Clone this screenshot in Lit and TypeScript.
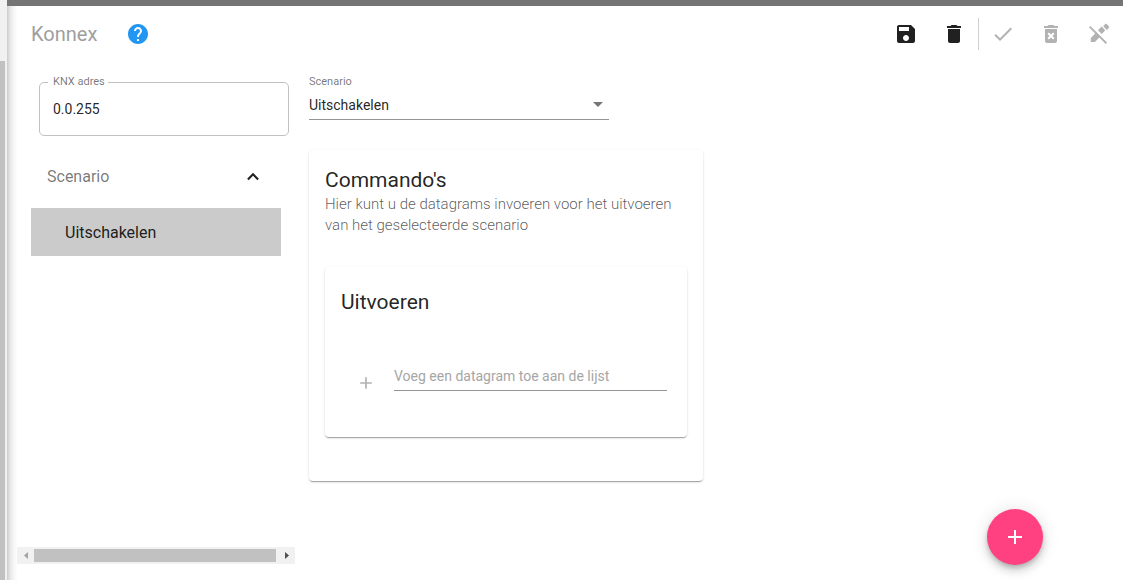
import { LitElement, html, css, svg } from "lit";
import { customElement, state } from "lit/decorators.js";

const paths = {
  help: "M12 2C6.48 2 2 6.48 2 12s4.48 10 10 10 10-4.48 10-10S17.520 2 12 2zm1 17h-2v-2h2v2zm2.070-7.750l-.9.920C13.450 12.900 13 13.500 13 15h-2v-.5c0-1.100.45-2.100 1.170-2.830l1.240-1.260c.37-.36.59-.86.59-1.410 0-1.100-.9-2-2-2s-2 .9-2 2H8c0-2.210 1.790-4 4-4s4 1.790 4 4c0 .88-.36 1.680-.93 2.250z",
  save: "M17 3H5c-1.110 0-2 .9-2 2v14c0 1.100.89 2 2 2h14c1.100 0 2-.9 2-2V7l-4-4zm-5 16c-1.660 0-3-1.340-3-3s1.340-3 3-3 3 1.340 3 3-1.340 3-3 3zm3-10H5V5h10v4z",
  trash: "M6 19c0 1.100.9 2 2 2h8c1.100 0 2-.9 2-2V7H6v12zM19 4h-3.500l-1-1h-5l-1 1H5v2h14V4z",
  check: "M9 16.170L4.830 12l-1.420 1.410L9 19 21 7l-1.410-1.410z",
  add: "M19 13h-6v6h-2v-6H5v-2h6V5h2v6h6v2z",
  chevronUp: "M12 7l-7 7 1.800 1.800L12 10.600l5.200 5.200L19 14z",
  removeAll: "M6 19c0 1.100.9 2 2 2h8c1.100 0 2-.9 2-2V7H6v12zm2.460-7.120l1.410-1.410L12 12.590l2.120-2.120 1.410 1.410L13.410 14l2.120 2.120-1.410 1.410L12 15.410l-2.120 2.120-1.410-1.410L10.590 14l-2.130-2.120zM15.500 4l-1-1h-5l-1 1H5v2h14V4z",
  editOff: "M2 5.200L3.300 3.900 20 20.600 18.700 21.900 12.300 15.600 7.900 20H3.800v-4.100l4.400-4.400zM11 8.200L14.600 4.600 18.300 8.300 14.700 11.900zM16.200 4.200L18.300 2.100c.4-.4 1-.4 1.400 0L22 4.400c.4.4.4 1 0 1.400L19.900 7.900z",
};

const icon = (d: string, size = 24) => svg`
  <svg class="icon" width=${size} height=${size} viewBox="0 0 24 24" aria-hidden="true"><path d=${d} /></svg>`;

@customElement("app-root")
export class AppRoot extends LitElement {
  static styles = css`
    :host {
      display: grid;
      grid-template-columns: 7px minmax(0, 1fr);
      min-height: 100vh;
      background: #fff;
      color: rgba(0, 0, 0, 0.87);
      font: 400 14px/20px Roboto, "Liberation Sans", sans-serif;
    }
    * { box-sizing: border-box; }
    button, input, select { font: inherit; color: inherit; margin: 0; border: 0; padding: 0; background: none; border-radius: 0; outline: 0; }
    button { cursor: pointer; }
    h1, h2, h3, p, ul { margin: 0; padding: 0; font-weight: 400; list-style: none; }
    .icon { display: block; fill: currentColor; }

    .track { background: #f1f1f1; padding: 61px 2px 0 0; display: flex; }
    .track-thumb { flex: 1; background: #c1c1c1; }

    .panel {
      display: flex;
      flex-direction: column;
      border-top: 6px solid #757575;
      background: linear-gradient(to right, #ccc, #e6e6e6 3px, #f7f7f7 7px, #fff 11px);
    }
    .toolbar { display: flex; align-items: center; height: 56px; padding-left: 24px; }
    .title { font-size: 20px; line-height: 28px; font-weight: 400; color: #9e9e9e; }
    .help { margin-left: 29px; color: #2196f3; }
    .actions { display: flex; align-items: center; margin-left: auto; }
    .action { width: 48px; height: 48px; display: grid; place-items: center; }
    .action:disabled { color: #b2b2b2; cursor: default; }
    .divider { width: 1px; height: 32px; background: #cfcfcf; }

    .body { flex: 1; display: flex; }
    .side { width: 278px; margin: 0 14px 16px 10px; display: flex; flex-direction: column; }
    .side-content { flex: 1; padding: 20px 6px 0 14px; }
    .outlined { position: relative; display: flex; margin-left: 8px; border: 1px solid #c1c1c1; border-radius: 5px; height: 54px; }
    .outlined-label { position: absolute; left: 8px; top: -9px; padding: 0 3px 0 5px; background: #fff; font-size: 11px; line-height: 16px; color: rgba(0, 0, 0, 0.54); }
    .outlined-input { flex: 1; min-width: 0; padding: 0 13px; }
    .group { display: flex; align-items: center; justify-content: space-between; width: 100%; height: 48px; margin: 16px 0 8px; padding: 1px 26px 0 16px; font-size: 16px; }
    .group-name { color: rgba(0, 0, 0, 0.54); }
    .item { display: block; width: 250px; height: 48px; padding: 1px 0 0 34px; background: #cbcbcb; font-size: 16px; text-align: left; }

    .hscroll { display: flex; align-items: center; height: 17px; background: #f1f1f1; }
    .hscroll-arrow { width: 17px; height: 17px; display: grid; place-items: center; color: #a3a3a3; }
    .hscroll-arrow.next { color: #505050; margin-left: auto; }
    .hscroll-thumb { width: 242px; height: 13px; background: #c1c1c1; }

    .main { flex: 1; min-width: 0; padding: 12px 16px 16px 0; }
    .field { position: relative; display: flex; flex-direction: column; width: 300px; }
    .field-label { font-size: 11px; line-height: 16px; color: rgba(0, 0, 0, 0.54); }
    .select { appearance: none; height: 30px; border-bottom: 1px solid #949494; }
    .caret { position: absolute; right: 6px; bottom: 13px; border: 5px solid transparent; border-top-color: #757575; border-bottom: 0; pointer-events: none; }
    .card {
      border-radius: 4px;
      background: #fff;
      box-shadow: 0 2px 1px -1px rgba(0, 0, 0, 0.2), 0 1px 1px rgba(0, 0, 0, 0.14), 0 1px 3px rgba(0, 0, 0, 0.12);
    }
    .outer { width: 100%; max-width: 394px; margin-top: 30px; padding: 16px 16px 44px; }
    .heading { font-size: 21px; line-height: 28px; }
    .subtitle { font-size: 15px; font-weight: 300; line-height: 21px; color: rgba(0, 0, 0, 0.66); }
    .inner { margin-top: 31px; padding: 21px 20px 46px 16px; }
    .add-row { display: flex; align-items: flex-end; gap: 20px; margin-top: 46px; padding-left: 16px; }
    .add { display: grid; justify-content: center; width: 17px; height: 18px; color: #b2b2b2; }
    .datagram { flex: 1; min-width: 0; height: 29px; border-bottom: 1px solid #949494; }
    .datagram::placeholder { color: #a6a6a6; opacity: 1; }

    .fab {
      position: fixed;
      right: 80px;
      bottom: 15px;
      width: 56px;
      height: 56px;
      display: grid;
      place-items: center;
      border-radius: 50%;
      background: #ff4081;
      color: #fff;
      box-shadow: 0 3px 5px -1px rgba(0, 0, 0, 0.2), 0 6px 10px rgba(0, 0, 0, 0.14), 0 1px 18px rgba(0, 0, 0, 0.12);
    }
  `;

  @state() private address = "0.0.255";
  @state() private open = true;
  @state() private scenarios = ["Uitschakelen"];

  private action(label: string, d: string, disabled = false) {
    return html`<button class="action" aria-label=${label} ?disabled=${disabled}>${icon(d)}</button>`;
  }

  render() {
    return html`
      <div class="track"><div class="track-thumb"></div></div>
      <div class="panel">
        <header class="toolbar">
          <h1 class="title">Konnex</h1>
          <button class="help" aria-label="Help">${icon(paths.help)}</button>
          <div class="actions">
            ${this.action("Opslaan", paths.save)}
            ${this.action("Verwijderen", paths.trash)}
            <span class="divider"></span>
            ${this.action("Bevestigen", paths.check, true)}
            ${this.action("Alles verwijderen", paths.removeAll, true)}
            ${this.action("Bewerken uit", paths.editOff, true)}
          </div>
        </header>
        <div class="body">
          <aside class="side">
            <div class="side-content">
              <div class="outlined">
                <label class="outlined-label" for="address">KNX adres</label>
                <input class="outlined-input" id="address" .value=${this.address}
                  @input=${(e: Event) => (this.address = (e.target as HTMLInputElement).value)} />
              </div>
              <button class="group" aria-expanded=${this.open} @click=${() => (this.open = !this.open)}>
                <span class="group-name">Scenario</span>${icon(paths.chevronUp, 20)}
              </button>
              ${this.open
                ? html`<ul>${this.scenarios.map((s) => html`<li><button class="item">${s}</button></li>`)}</ul>`
                : ""}
            </div>
            <div class="hscroll">
              <span class="hscroll-arrow"><svg class="icon" width="4" height="7" viewBox="0 0 4 7"><path d="M4 0v7L0 3.500z" /></svg></span>
              <span class="hscroll-thumb"></span>
              <span class="hscroll-arrow next"><svg class="icon" width="4" height="7" viewBox="0 0 4 7"><path d="M0 0v7l4-3.500z" /></svg></span>
            </div>
          </aside>
          <main class="main">
            <div class="field">
              <label class="field-label" for="scenario">Scenario</label>
              <select class="select" id="scenario">
                ${this.scenarios.map((s) => html`<option>${s}</option>`)}
              </select>
              <span class="caret"></span>
            </div>
            <section class="card outer">
              <h2 class="heading">Commando's</h2>
              <p class="subtitle">Hier kunt u de datagrams invoeren voor het uitvoeren van het geselecteerde scenario</p>
              <section class="card inner">
                <h3 class="heading">Uitvoeren</h3>
                <div class="add-row">
                  <button class="add" aria-label="Datagram toevoegen">${icon(paths.add, 20)}</button>
                  <input class="datagram" aria-label="Datagram" placeholder="Voeg een datagram toe aan de lijst" />
                </div>
              </section>
            </section>
          </main>
        </div>
      </div>
      <button class="fab" aria-label="Toevoegen">${icon(paths.add)}</button>
    `;
  }
}
